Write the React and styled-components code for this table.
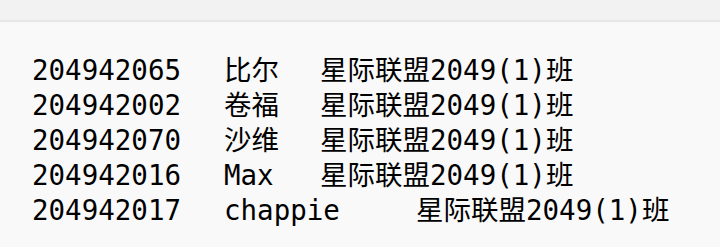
import React from 'react';
import styled, { createGlobalStyle } from 'styled-components';

const GlobalStyle = createGlobalStyle`
  html, body {
    margin: 0;
    padding: 0;
    background-color: #f9f9f9;
  }
`;

const Page = styled.div`
  width: 720px;
  height: 247px;
  overflow: hidden;
  background-color: #f9f9f9;
`;

const TopBar = styled.div`
  height: 20px;
  background-color: #f2f2f2;
  border-bottom: 2px solid #e6e6e6;
`;

const Output = styled.div`
  padding: 31px 32px 0;
  font-family: "DejaVu Sans Mono", "Noto Sans CJK SC", monospace;
  font-size: 27.5px;
  color: #000;
`;

const Line = styled.div`
  height: 35px;
  line-height: 35px;
  white-space: pre;
  tab-size: 96px;
`;

const students = [
  { id: '204942065', name: '比尔', group: '星际联盟2049(1)班' },
  { id: '204942002', name: '卷福', group: '星际联盟2049(1)班' },
  { id: '204942070', name: '沙维', group: '星际联盟2049(1)班' },
  { id: '204942016', name: 'Max', group: '星际联盟2049(1)班' },
  { id: '204942017', name: 'chappie', group: '星际联盟2049(1)班' },
];

function App() {
  return (
    <Page>
      <GlobalStyle />
      <TopBar />
      <Output>
        {students.map((s) => (
          <Line key={s.id}>{`${s.id}\t${s.name}\t${s.group}`}</Line>
        ))}
      </Output>
    </Page>
  );
}

export default App;
